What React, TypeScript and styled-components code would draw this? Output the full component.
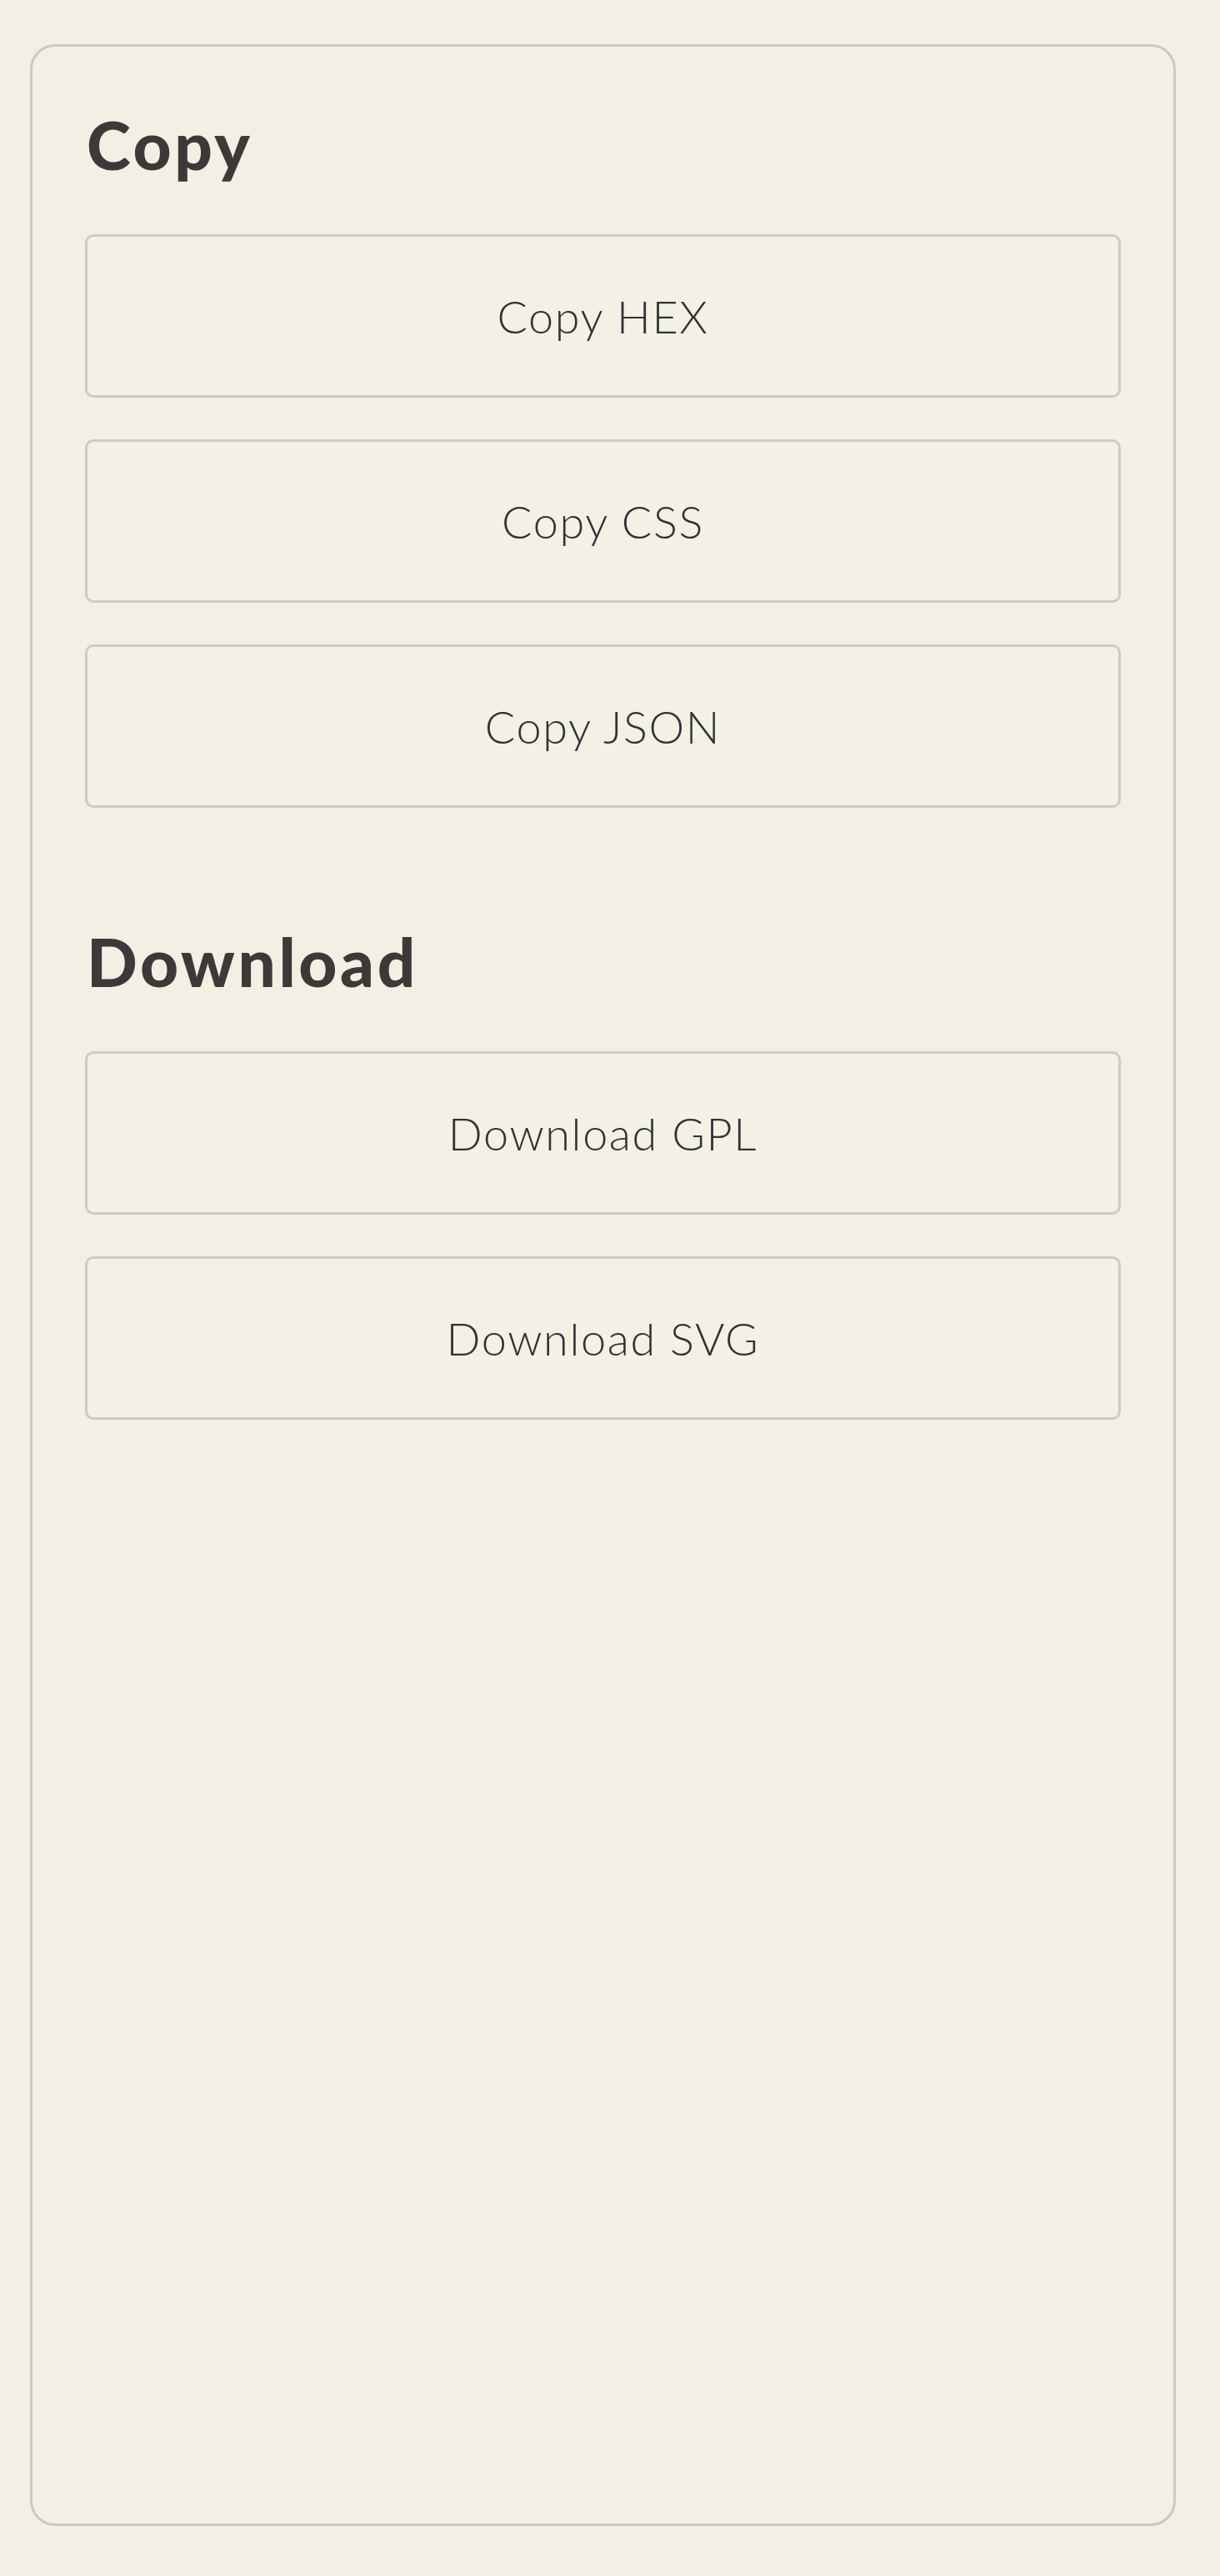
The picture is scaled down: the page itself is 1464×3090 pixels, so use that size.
import React from 'react';
import styled, { createGlobalStyle } from 'styled-components';

const GlobalStyle = createGlobalStyle`
  html, body {
    margin: 0;
    padding: 0;
    background: #f2efe4;
  }
  body {
    font-family: Lato, "Open Sans", "Liberation Sans", sans-serif;
    color: #3b3a38;
  }
`;

const Page = styled.div`
  padding: 53px 53px 60px 36px;
`;

const Panel = styled.aside`
  box-sizing: border-box;
  width: 1375px;
  height: 2977px;
  padding: 69px 63px;
  border: 3px solid #cbcabd;
  border-radius: 30px;
  background: #f2efe4;
  display: flex;
  flex-direction: column;
`;

const Section = styled.section<{ $spaced?: boolean }>`
  display: flex;
  flex-direction: column;
  margin-top: ${p => (p.$spaced ? '136px' : '0')};
`;

const Heading = styled.h2`
  margin: 0 0 60px;
  padding-left: 2px;
  font-size: 80px;
  line-height: 1.2;
  font-weight: 900;
  letter-spacing: 3.6px;
  color: #3b3a38;
`;

const ButtonList = styled.div`
  display: flex;
  flex-direction: column;
  gap: 50px;
`;

const ActionButton = styled.button`
  box-sizing: border-box;
  height: 196px;
  width: 100%;
  border: 3px solid #cdccbf;
  border-radius: 10px;
  background: #f3f0e5;
  font-family: Lato, "Open Sans", "Liberation Sans", sans-serif;
  font-size: 54px;
  font-weight: 300;
  letter-spacing: 1.6px;
  color: #303236;
  cursor: pointer;
  display: flex;
  align-items: center;
  justify-content: center;
`;

const sections = [
  { title: 'Copy', actions: ['Copy HEX', 'Copy CSS', 'Copy JSON'] },
  { title: 'Download', actions: ['Download GPL', 'Download SVG'] },
];

const App: React.FC = () => {
  return (
    <>
      <GlobalStyle />
      <Page>
        <Panel>
          {sections.map((section, i) => (
            <Section key={section.title} $spaced={i > 0}>
              <Heading>{section.title}</Heading>
              <ButtonList>
                {section.actions.map(label => (
                  <ActionButton key={label} type="button">
                    {label}
                  </ActionButton>
                ))}
              </ButtonList>
            </Section>
          ))}
        </Panel>
      </Page>
    </>
  );
};

export default App;
